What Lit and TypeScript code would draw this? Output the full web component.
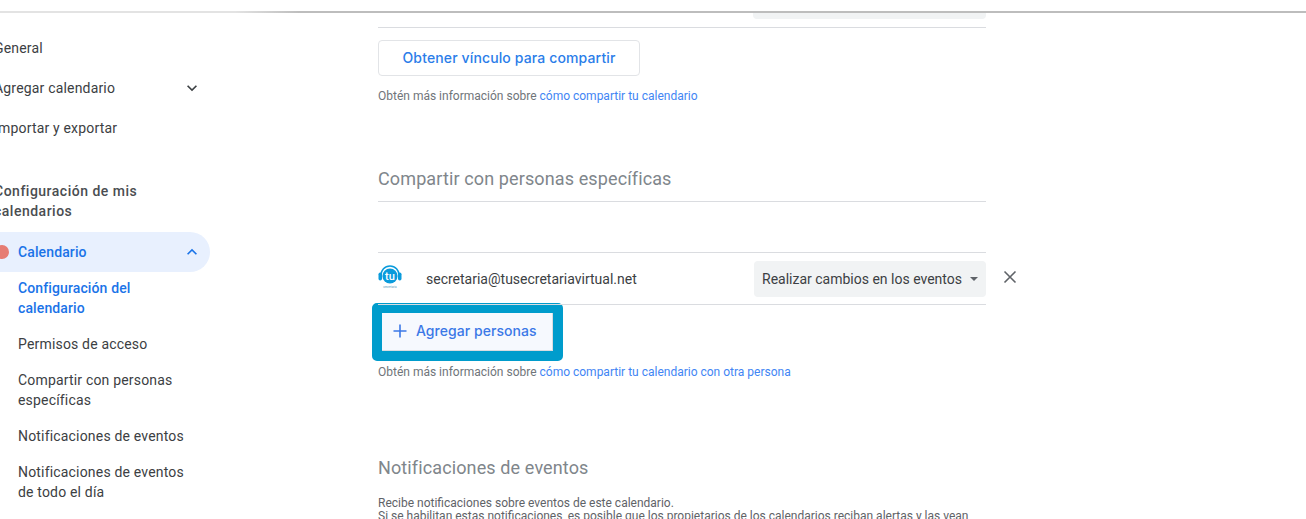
import { LitElement, html, css } from "lit";
import { customElement } from "lit/decorators.js";

const chevron = (up: boolean) => html`<svg width="20" height="20" viewBox="0 0 24 24" aria-hidden="true">
  <path d=${up ? "M7.41 15.41 12 10.83l4.59 4.58L18 14l-6-6-6 6z" : "M16.59 8.59 12 13.17 7.41 8.59 6 10l6 6 6-6z"}></path>
</svg>`;

@customElement("app-root")
export class AppRoot extends LitElement {
  static styles = css`
    :host { display: block; width: 1306px; height: 519px; overflow: hidden; background: #fff; font-family: Roboto, "Liberation Sans", sans-serif; color: #3c4043; }
    .topline { height: 2px; margin-top: 11px; background: linear-gradient(90deg, #e3e3e3 0, #e3e3e3 235px, #bdbdbd 300px, #bdbdbd 100%); }
    .layout { display: flex; height: 506px; overflow: hidden; }
    .side { width: 216px; margin-left: -6px; flex: none; font-size: 14px; line-height: 20px; padding-top: 15px; }
    .nav { display: flex; align-items: center; justify-content: space-between; height: 40px; width: 214px; padding-right: 6px; box-sizing: border-box; color: #3c4043; letter-spacing: .18px; white-space: nowrap; }
    .nav svg { fill: #3c4043; }
    .side-h { margin: 33px 0 0; font-size: 14px; line-height: 20px; font-weight: 500; letter-spacing: .5px; color: #4a4d51; width: 170px; }
    .cal { display: flex; align-items: center; width: 216px; height: 40px; box-sizing: border-box; margin: 11px 0 0; padding: 0 8px 0 0; background: #e8f0fe; border-radius: 0 20px 20px 0; color: #1a73e8; font-weight: 500; }
    .dot { width: 14px; height: 14px; border-radius: 50%; background: #e67c73; margin-left: 1px; flex: none; }
    .cal span { margin-left: 9px; flex: 1; letter-spacing: .12px; }
    .cal svg { fill: #1a73e8; }
    .sub { margin: 0; padding: 6px 0 0; list-style: none; }
    .sub li { padding: 0 24px 16px 24px; width: 170px; letter-spacing: .18px; color: #3c4043; }
    .sub li.on { color: #1a73e8; font-weight: 500; letter-spacing: .12px; }
    .main { width: 608px; margin-left: 168px; flex: none; font-size: 12px; }
    .stub { height: 6px; margin-left: 375px; background: #f1f3f4; border-radius: 0 0 4px 4px; }
    .rule { border-top: 1px solid #dadce0; }
    .rule-top { margin-top: 8px; }
    .btn { display: flex; align-items: center; box-sizing: border-box; border: 1px solid #e2e4e7; border-radius: 4px; background: #fff; color: #2b7de9; font: 500 14px/20px Inter, Roboto, sans-serif; letter-spacing: .13px; }
    .share { width: 262px; height: 36px; margin-top: 12px; justify-content: center; }
    .help { margin: 12px 0 0; font-size: 12px; line-height: 16px; color: #70757a; }
    .help a { color: #4285f4; text-decoration: none; }
    h2 { margin: 0; font-size: 18px; line-height: 24px; font-weight: 400; color: #80868b; letter-spacing: .12px; }
    .h-share { margin-top: 63px; }
    .r1 { margin-top: 10px; }
    .person { display: flex; align-items: center; height: 51px; margin-top: 50px; border-top: 1px solid #dadce0; border-bottom: 1px solid #dadce0; position: relative; }
    .logo { width: 24px; height: 28px; flex: none; margin-right: 24px; margin-top: 1px; }
    .logo text { font-family: Roboto, sans-serif; }
    .email { flex: 1; font-size: 14px; color: #3c4043; }
    .select { display: flex; align-items: center; width: 232px; height: 36px; box-sizing: border-box; padding-left: 8px; background: #f1f3f4; border-radius: 4px; font-size: 14px; color: #3c4043; white-space: nowrap; }
    .caret { width: 0; height: 0; margin-left: 8px; border-left: 4px solid transparent; border-right: 4px solid transparent; border-top: 4px solid #5f6368; }
    .close { position: absolute; left: 624px; top: 16px; width: 16px; height: 16px; stroke: #5f6368; stroke-width: 1.6; fill: none; }
    .hl { width: 191px; height: 58px; box-sizing: border-box; margin: -2px 0 0 -6px; border: 10px solid #009ccc; border-radius: 5px; }
    .add { width: 100%; height: 100%; padding: 0 0 2px 10px; background: #f6f9fe; border: 0; border-right: 1px solid #dadce0; border-bottom: 1px solid #dadce0; color: #3b78e7; border-radius: 0; letter-spacing: .05px; }
    .add svg { width: 16px; height: 16px; margin-right: 8px; flex: none; stroke: #3b78e7; stroke-width: 1.6; fill: none; }
    .h-help { margin-top: 3px; }
    .h-notif { margin-top: 76px; }
    .desc { margin: 17px 0 0; font-size: 12px; line-height: 13px; color: #5f6368; white-space: nowrap; }
  `;

  render() {
    return html`
      <div class="topline"></div>
      <div class="layout">
        <nav class="side">
          <div class="nav">General</div>
          <div class="nav">Agregar calendario ${chevron(false)}</div>
          <div class="nav">Importar y exportar</div>
          <h3 class="side-h">Configuración de mis calendarios</h3>
          <div class="cal"><i class="dot"></i><span>Calendario</span>${chevron(true)}</div>
          <ul class="sub">
            <li class="on">Configuración del calendario</li>
            <li>Permisos de acceso</li>
            <li>Compartir con personas específicas</li>
            <li>Notificaciones de eventos</li>
            <li>Notificaciones de eventos de todo el día</li>
          </ul>
        </nav>
        <main class="main">
          <div class="stub"></div>
          <div class="rule rule-top"></div>
          <div class="btn share">Obtener vínculo para compartir</div>
          <p class="help">Obtén más información sobre <a>cómo compartir tu calendario</a></p>
          <h2 class="h-share">Compartir con personas específicas</h2>
          <div class="rule r1"></div>
          <div class="person">
            <svg class="logo" viewBox="0 0 24 28" aria-hidden="true">
              <path d="M2.800 11.500C2.800 5 6.800 1 12 1S21.200 5 21.200 11.500" fill="none" stroke="#0a9bdc" stroke-width="1.500"></path>
              <rect x="0.500" y="7.500" width="3.500" height="8" rx="1.700" fill="#0a9bdc"></rect>
              <rect x="20" y="7.500" width="3.500" height="8" rx="1.700" fill="#0a9bdc"></rect>
              <circle cx="12" cy="11" r="7.600" fill="#0a9bdc"></circle>
              <text x="12" y="14.800" text-anchor="middle" font-size="11" font-weight="500" fill="#fff">tu</text>
              <text x="12" y="22.500" text-anchor="middle" font-size="3" fill="#5f9fc0">secretaria</text>
            </svg>
            <span class="email">secretaria@tusecretariavirtual.net</span>
            <div class="select">Realizar cambios en los eventos<i class="caret"></i></div>
            <svg class="close" viewBox="0 0 16 16" aria-hidden="true"><path d="M2.500 2.500l11 11M13.500 2.500l-11 11"></path></svg>
          </div>
          <div class="hl">
            <div class="btn add">
              <svg viewBox="0 0 16 16" aria-hidden="true"><path d="M8 1.500v13M1.500 8h13"></path></svg>
              Agregar personas
            </div>
          </div>
          <p class="help h-help">Obtén más información sobre <a>cómo compartir tu calendario con otra persona</a></p>
          <h2 class="h-notif">Notificaciones de eventos</h2>
          <p class="desc">Recibe notificaciones sobre eventos de este calendario.<br>Si se habilitan estas notificaciones, es posible que los propietarios de los calendarios reciban alertas y las vean</p>
        </main>
      </div>
    `;
  }
}
